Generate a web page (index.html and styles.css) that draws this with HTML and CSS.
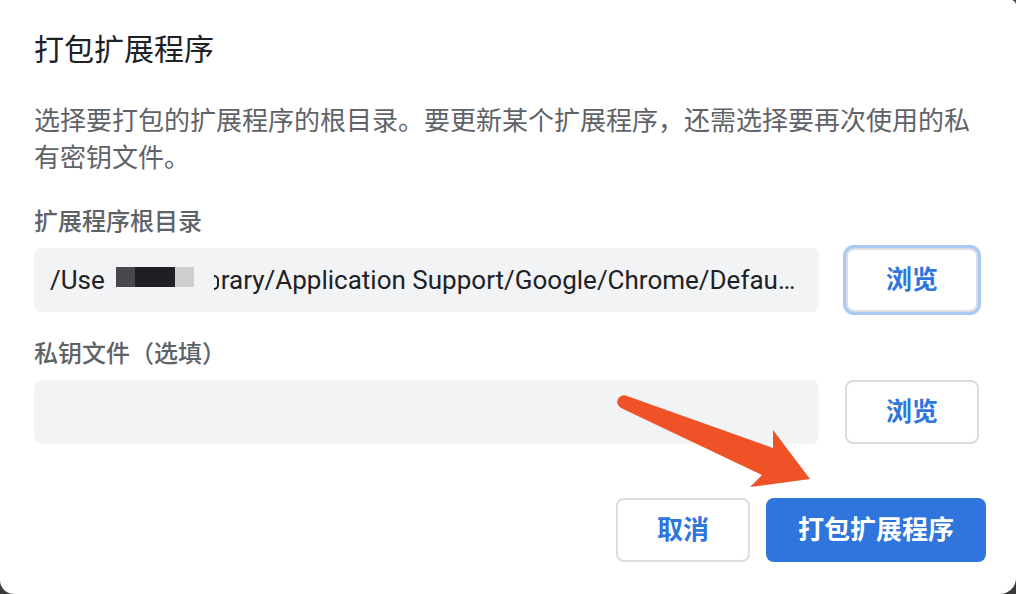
FILE: index.html
```html
<!DOCTYPE html>
<html lang="zh-CN">
<head>
<meta charset="utf-8">
<title>打包扩展程序</title>
<link rel="stylesheet" href="styles.css">
</head>
<body>
<div class="dialog">
  <h1 class="title">打包扩展程序</h1>
  <p class="desc">选择要打包的扩展程序的根目录。要更新某个扩展程序，还需选择要再次使用的私有密钥文件。</p>

  <div class="field">
    <div class="label">扩展程序根目录</div>
    <div class="row">
      <div class="input">
        <span class="path">/Use</span><span class="redact"><span class="r1"></span><span class="r2"></span><span class="r3"></span></span><span class="bowl"></span><span class="path rest">rary/Application Support/Google/Chrome/Defau…</span>
      </div>
      <button class="btn browse focused">浏览</button>
    </div>
  </div>

  <div class="field second">
    <div class="label">私钥文件（选填）</div>
    <div class="row">
      <div class="input"></div>
      <button class="btn browse">浏览</button>
    </div>
  </div>

  <div class="actions">
    <button class="btn cancel">取消</button>
    <button class="btn primary">打包扩展程序</button>
  </div>

  <svg class="arrow" width="1016" height="594" viewBox="0 0 1016 594">
    <path d="M627 396 L773 448 L773 430 L810 479 L750 487 L762 475 L621 408 A6.3 6.3 0 0 1 627 396 Z" fill="#f05228"/>
  </svg>
</div>
</body>
</html>
```

FILE: styles.css
```css
html, body {
  margin: 0;
  padding: 0;
  background: #3a3a3c;
  width: 1016px;
  height: 594px;
  overflow: hidden;
}

.dialog {
  position: relative;
  box-sizing: border-box;
  width: 1016px;
  height: 594px;
  background: #ffffff;
  border-radius: 0 5px 16px 14px;
  padding: 27px 36px 32px 34px;
  font-family: "Noto Sans CJK SC", "Noto Sans", sans-serif;
  display: flex;
  flex-direction: column;
}

.title {
  margin: 0;
  font-size: 30px;
  font-weight: 400;
  line-height: 40px;
  color: #202124;
}

.desc {
  margin: 33px 0 0 0;
  font-size: 26px;
  line-height: 37px;
  color: #5f6368;
  width: 946px;
}

.field {
  margin-top: 30px;
}

.field.second {
  margin-top: 24px;
}

.label {
  font-size: 24px;
  line-height: 32px;
  font-weight: 500;
  color: #5f6368;
  margin-bottom: 12px;
}

.row {
  display: flex;
  align-items: center;
  gap: 26px;
}

.input {
  box-sizing: border-box;
  width: 785px;
  height: 64px;
  background: #f1f3f4;
  border-radius: 8px;
  padding: 0 21px 0 16px;
  display: flex;
  align-items: center;
  overflow: hidden;
  white-space: nowrap;
  font-family: Roboto, "Liberation Sans", sans-serif;
  font-size: 26px;
  color: #202124;
}

.redact {
  display: inline-flex;
  height: 20px;
  margin-left: 11px;
  margin-right: 20px;
  margin-top: -6px;
}
.redact span { display: block; height: 20px; }
.r1 { width: 19px; background: #48484c; }
.r2 { width: 40px; background: #1f2023; }
.r3 { width: 19px; background: #cfcfd1; }

.bowl {
  display: inline-block;
  box-sizing: border-box;
  width: 5px;
  height: 15px;
  margin-top: 4px;
  margin-right: 2px;
  border: 2px solid #202124;
  border-left: none;
  border-radius: 0 8px 8px 0;
}

.btn {
  box-sizing: border-box;
  font-family: "Noto Sans CJK SC", "Noto Sans", sans-serif;
  font-size: 26px;
  font-weight: 700;
  border-radius: 8px;
  cursor: pointer;
  padding: 0 0 5px 0;
}

.browse {
  width: 134px;
  height: 64px;
  background: #ffffff;
  border: 2px solid #dadce0;
  color: #2f75dc;
}

.browse.focused {
  box-shadow: 0 0 0 3px #a9c8f6;
  width: 132px;
  margin-left: 1px;
}

.actions {
  margin-top: auto;
  display: flex;
  justify-content: flex-end;
  gap: 16px;
  margin-right: -6px;
}

.cancel {
  width: 134px;
  height: 64px;
  background: #ffffff;
  border: 2px solid #dadce0;
  color: #2f75dc;
}

.primary {
  width: 220px;
  height: 64px;
  background: #2f75dc;
  border: none;
  color: #ffffff;
}

.arrow {
  position: absolute;
  left: 0;
  top: 0;
  pointer-events: none;
}
```
